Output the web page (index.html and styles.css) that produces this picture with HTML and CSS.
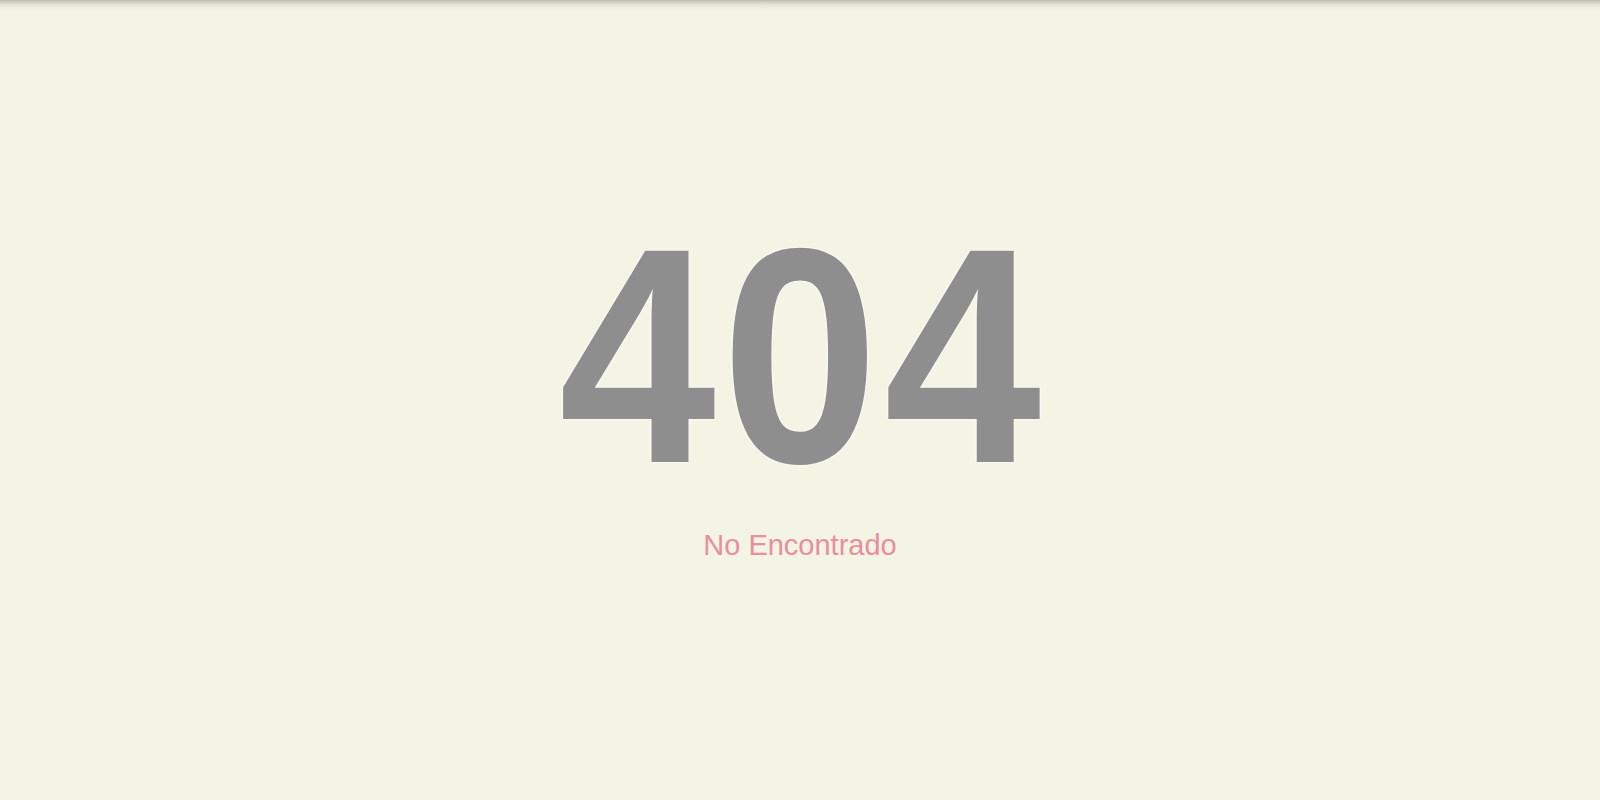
FILE: index.html
```html
<!DOCTYPE html>
<html lang="es">
<head>
<meta charset="utf-8">
<title>404</title>
<link rel="stylesheet" href="styles.css">
</head>
<body>
<main class="page">
  <h1 class="code">404</h1>
  <p class="message">No Encontrado</p>
</main>
</body>
</html>
```
FILE: styles.css
```css
html, body {
  margin: 0;
  height: 100%;
}
body {
  background-color: #f3f4e3;
  background-image: linear-gradient(to bottom, rgba(90, 90, 80, 0.35), rgba(90, 90, 80, 0.08) 5px, rgba(90, 90, 80, 0) 11px);
  background-repeat: no-repeat;
  font-family: "Liberation Sans", Arial, sans-serif;
}
.page {
  padding-top: 202px;
  text-align: center;
}
.code {
  margin: 0;
  font-size: 307px;
  font-weight: bold;
  line-height: 1;
  color: #8e8e8e;
  letter-spacing: 6px;
  padding-left: 6px;
  transform: scaleX(0.92);
  text-shadow: 0 0 2px #ffffff, 0 0 4px rgba(255, 255, 255, 0.8);
}
.message {
  margin: 22px 0 0;
  font-size: 29px;
  line-height: 1;
  color: #e98ea0;
}
```
